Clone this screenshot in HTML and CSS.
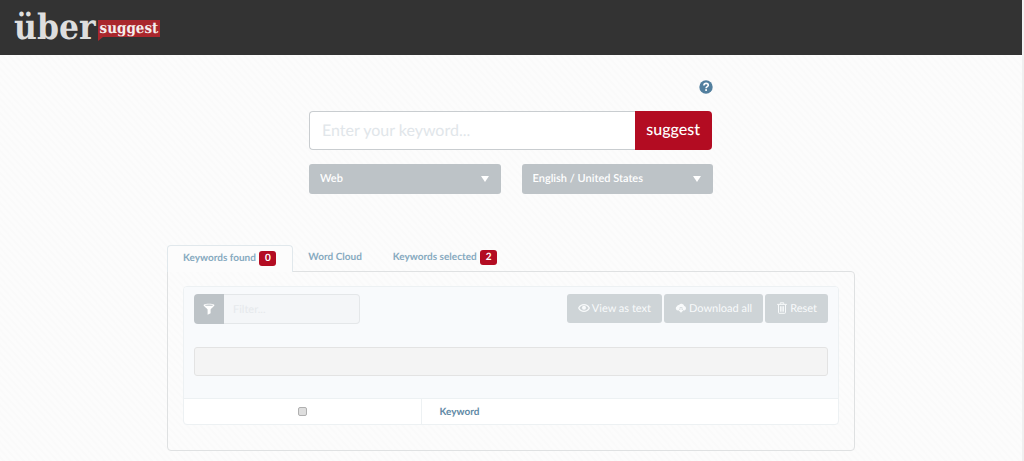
FILE: index.html
```html
<!DOCTYPE html>
<html lang="en">
<head>
<meta charset="utf-8">
<title>Übersuggest</title>
<link rel="stylesheet" href="styles.css">
</head>
<body>
<header class="site-header">
  <a class="logo" href="#"><span class="logo-main">über</span><span class="logo-tag">suggest</span></a>
</header>
<main class="content">
  <form class="search">
    <a class="help" href="#" aria-label="Help"><svg viewBox="0 0 14 14" width="14" height="14"><circle cx="7" cy="7" r="6.7" fill="#527f9e"/><path d="M4.9 5.5C5 4 5.900 3.400 7.100 3.400 8.500 3.400 9.300 4.200 9.300 5.200 9.300 6.700 7.100 6.600 7.100 8.300" fill="none" stroke="#fff" stroke-width="1.600"/><rect x="6.200" y="9.200" width="1.800" height="1.700" fill="#fff"/></svg></a>
    <div class="search-row">
      <input class="search-input" type="text" placeholder="Enter your keyword..." aria-label="Keyword">
      <button class="search-button" type="button">suggest</button>
    </div>
    <div class="options">
      <div class="select-wrap">
        <select class="select" aria-label="Source"><option>Web</option></select>
        <svg class="arrow" viewBox="0 0 8 6" width="8" height="6"><path d="M0 0H8L4 6Z" fill="#fff"/></svg>
      </div>
      <div class="select-wrap">
        <select class="select" aria-label="Language"><option>English / United States</option></select>
        <svg class="arrow" viewBox="0 0 8 6" width="8" height="6"><path d="M0 0H8L4 6Z" fill="#fff"/></svg>
      </div>
    </div>
  </form>
  <section class="results">
    <nav class="tabs">
      <a class="tab tab-active" href="#">Keywords found <span class="badge">0</span></a>
      <a class="tab" href="#">Word Cloud</a>
      <a class="tab" href="#">Keywords selected <span class="badge">2</span></a>
    </nav>
    <div class="panel">
      <div class="box">
        <div class="tools">
          <div class="toolbar">
            <div class="filter">
              <label class="filter-icon" for="filter" aria-label="Filter"><svg viewBox="0 0 12 12" width="12" height="12"><path d="M.5 2.200C.5 .2 11.500 .2 11.500 2.200 11.500 2.800 7.600 6 7.600 6.400V10.300L4.600 11.700V6.400C4.600 6 .5 2.800 .5 2.200Z" fill="#fff"/><ellipse cx="6" cy="2.200" rx="4" ry=".6" fill="#bdc3c7"/></svg></label>
              <input class="filter-input" id="filter" type="text" placeholder="Filter...">
            </div>
            <div class="actions">
              <button class="action" type="button"><svg viewBox="0 0 12 10" width="12" height="10"><path d="M.7 5C3 .5 9 .5 11.300 5 9 9.500 3 9.500 .7 5Z" fill="none" stroke="#f8fafb" stroke-width="1.300"/><circle cx="6" cy="4.800" r="2" fill="#f8fafb"/></svg>View as text</button>
              <button class="action" type="button"><svg viewBox="0 0 12 10" width="12" height="10"><path d="M2.800 7.500A2.300 2.300 0 0 1 2 3.200 2 2 0 0 1 4 2.100 3 3 0 0 1 9.300 2.900 2.400 2.400 0 0 1 9.300 7.500H8.900L7.400 6.300V4.300H4.700V6.300L3.200 7.500Z" fill="#f8fafb"/><path d="M5.300 5H6.700V7H8.700L6 9.700 3.300 7H5.300Z" fill="#f8fafb"/></svg>Download all</button>
              <button class="action" type="button"><svg viewBox="-1 0 12 12" width="12" height="12"><path d="M3.300 1.800V.8H6.700V1.800M.2 2.400H9.800M1.500 3V10.600Q1.500 11.300 2.200 11.300H7.800Q8.500 11.300 8.500 10.600V3M3.600 4.200V9.700M5 4.200V9.700M6.400 4.200V9.700" fill="none" stroke="#f8fafb"/></svg>Reset</button>
            </div>
          </div>
          <div class="well"></div>
        </div>
        <table class="keywords">
          <thead><tr>
            <th class="col-check"><input class="check" type="checkbox" aria-label="Select all"></th>
            <th class="col-keyword">Keyword</th>
          </tr></thead>
        </table>
      </div>
    </div>
  </section>
</main>
</body>
</html>
```
FILE: styles.css
```css
* {
  box-sizing: border-box;
}

body {
  margin: 0;
  min-height: 100vh;
  border-right: 2px solid #f0f0f0;
  background: repeating-linear-gradient(48deg, #fcfcfc 0 2px, #fafafa 3px 4px, #fcfcfc 5px);
  font-family: Lato, sans-serif;
  font-size: 11px;
  line-height: 16px;
  text-rendering: geometricPrecision;
  color: #527f9e;
}

a {
  color: inherit;
  text-decoration: none;
}

svg {
  display: block;
}

input,
button,
select {
  margin: 0;
  font-family: inherit;
  text-rendering: inherit;
}

.site-header {
  height: 55px;
  padding: 8px 14px;
  background: #333;
}

.logo {
  display: inline-flex;
  align-items: flex-start;
  gap: 2px;
  font-family: "DejaVu Serif Condensed", "DejaVu Serif", serif;
  font-weight: bold;
}

.logo-main {
  font-size: 35px;
  line-height: 40px;
  color: #dedede;
}

.logo-tag {
  position: relative;
  margin-top: 12px;
  padding: 0 2px;
  background: #a9272d;
  font-size: 15px;
  line-height: 17px;
  color: #f4eeee;
}

.logo-tag::after {
  content: "";
  position: absolute;
  top: 100%;
  left: 0;
  border-top: 4px solid #a9272d;
  border-right: 5px solid transparent;
}

.content {
  padding: 25px 16px 11px;
}

.search {
  display: flex;
  flex-direction: column;
  max-width: 404px;
  margin: 0 auto;
}

.help {
  align-self: flex-end;
}

.search-row {
  display: flex;
  height: 39px;
  margin: 17px 1px 0 0;
}

.search-input {
  flex: 1;
  min-width: 0;
  padding: 0 12px;
  border: 1px solid #c9cdd0;
  border-right: 0;
  border-radius: 4px 0 0 4px;
  background: #fff;
  font-size: 16px;
}

.search-input::placeholder {
  color: #e1e6ea;
}

.search-button {
  padding: 0 12px 2px 11px;
  border: 0;
  border-radius: 0 4px 4px 0;
  background: #b30c22;
  font-size: 16px;
  font-weight: 500;
  color: #fff;
}

.options {
  display: grid;
  grid-template-columns: 1fr 1fr;
  gap: 21px;
  margin-top: 14px;
}

.select-wrap {
  position: relative;
}

.select {
  appearance: none;
  display: block;
  width: 100%;
  height: 30px;
  padding: 0 24px 2px 11px;
  border: 0;
  border-radius: 3px;
  background: #bdc3c7;
  font-size: 11px;
  font-weight: 600;
  color: #fff;
}

.arrow {
  position: absolute;
  top: 12px;
  right: 12px;
  pointer-events: none;
}

.results {
  max-width: 688px;
  margin: 51px auto 0;
}

.tabs {
  display: flex;
}

.tab {
  height: 26px;
  padding: 4px 16px 4px 15px;
  font-size: 10px;
  font-weight: bold;
  color: #87aac0;
}

.tab-active {
  position: relative;
  height: 27px;
  margin-bottom: -1px;
  border: 1px solid #e1e8ec;
  border-bottom: 0;
  border-radius: 4px 4px 0 0;
  background: #fcfcfc;
}

.badge {
  display: inline-block;
  min-width: 17px;
  margin-left: 1px;
  border-radius: 3px;
  background: #b30c22;
  line-height: 15px;
  text-align: center;
  color: #fff;
}

.panel {
  padding: 14px 15px 25px;
  border: 1px solid #dfe1e2;
  border-radius: 0 4px 4px 4px;
}

.box {
  overflow: hidden;
  border: 1px solid #edf1f3;
  border-radius: 4px;
  background: #fff;
}

.tools {
  padding: 7px 10px 22px;
  border-bottom: 1px solid #edf1f3;
  background: #f8fafc;
}

.toolbar {
  display: flex;
  justify-content: space-between;
  align-items: flex-start;
}

.filter {
  display: flex;
  width: 166px;
  height: 30px;
}

.filter-icon {
  display: grid;
  place-items: center;
  width: 30px;
  border-radius: 4px 0 0 4px;
  background: #bdc3c7;
}

.filter-input {
  flex: 1;
  min-width: 0;
  padding: 0 9px;
  border: 1px solid #e4e7e9;
  border-left: 0;
  border-radius: 0 4px 4px 0;
  background: #f4f6f8;
  font-size: 11px;
}

.filter-input::placeholder {
  color: #e6e9ec;
}

.actions {
  display: flex;
  gap: 2px;
}

.action {
  display: flex;
  align-items: center;
  gap: 2px;
  height: 29px;
  padding: 0 11px 1px;
  border: 0;
  border-radius: 3px;
  background: #ced4d7;
  font-size: 11px;
  color: #f8fafb;
}

.well {
  height: 29px;
  margin-top: 23px;
  border: 1px solid #e3e3e3;
  border-radius: 3px;
  background: #f4f4f4;
}

.keywords {
  width: 100%;
  border-collapse: collapse;
}

.keywords th {
  height: 25px;
  padding: 0;
}

.col-check {
  width: 237px;
  border-right: 1px solid #edf1f3;
}

.keywords .col-keyword {
  padding-left: 18px;
  text-align: left;
  font-size: 10px;
  color: #5f8aa6;
}

.check {
  appearance: none;
  display: block;
  width: 9px;
  height: 9px;
  margin: 0 auto;
  border: 1px solid #b0b0b0;
  border-radius: 2px;
  background: #dedede;
}
```
